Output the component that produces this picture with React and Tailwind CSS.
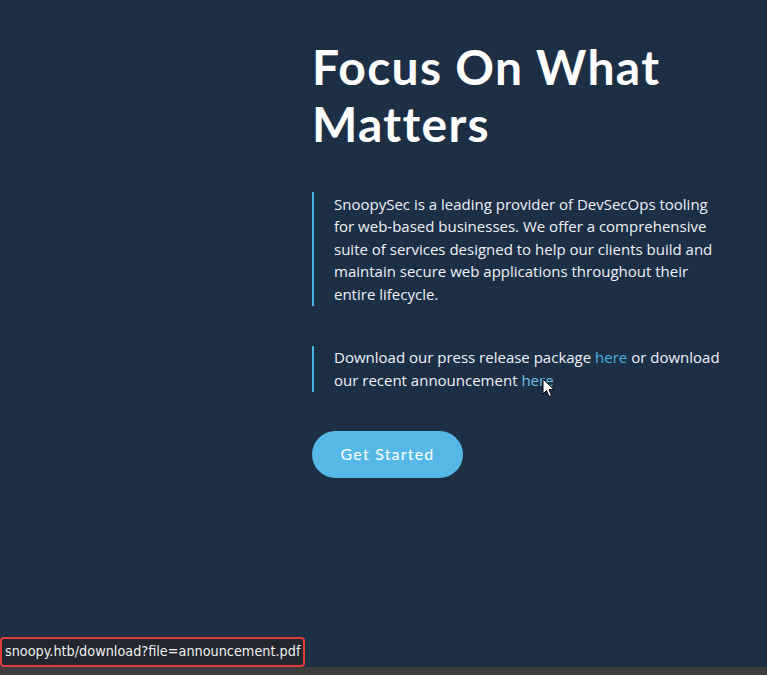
export default function App() {
  return (
    <div className="relative flex h-[675px] w-[767px] flex-col overflow-hidden bg-[#1d2f45]">
      <main className="flex flex-1 flex-col pl-[312px] pr-[40px] pt-[38px]">
        <h1
          className="text-[48px] font-bold leading-[57px] tracking-[1.3px] text-white"
          style={{ fontFamily: '"Lato", "Open Sans", sans-serif' }}
        >
          Focus On What
          <br />
          Matters
        </h1>
        <div
          className="mt-[40px] border-l-2 border-[#47b2e4] pl-[20px] text-[15px] leading-[22.5px] text-[#eef1f5]"
          style={{ fontFamily: '"Open Sans", sans-serif' }}
        >
          <p className="py-[0.5px]">
            SnoopySec is a leading provider of DevSecOps tooling for web-based businesses. We offer a comprehensive suite of services designed to help our clients build and maintain secure web applications throughout their entire lifecycle.
          </p>
        </div>
        <div
          className="mt-[40px] border-l-2 border-[#47b2e4] pl-[20px] text-[15px] leading-[23px] text-[#eef1f5]"
          style={{ fontFamily: '"Open Sans", sans-serif' }}
        >
          <p className="relative">
            Download our press release package <span className="text-[#47b2e4]">here</span> or download our recent announcement{" "}
            <span className="relative text-[#6fbfe6]">
              here
              <svg
                className="pointer-events-none absolute left-[21px] top-[8px]"
                width="13"
                height="20"
                viewBox="0 0 13 20"
              >
                <path
                  d="M1 1 L1 16 L4.5 12.5 L7 18.5 L9.5 17.5 L7 11.5 L12 11.5 Z"
                  fill="#ffffff"
                  stroke="#000000"
                  strokeWidth="1"
                />
              </svg>
            </span>
          </p>
        </div>
        <div className="mt-[39px]">
          <button
            className="h-[47px] w-[151px] rounded-full bg-[#56b8e6] text-[16px] font-normal tracking-[1.2px] text-white"
            style={{ fontFamily: '"Lato", "Open Sans", sans-serif' }}
          >
            Get Started
          </button>
        </div>
      </main>
      <div className="h-[8px] bg-[#3c3c3c]" />
      <div
        className="absolute bottom-[8px] left-0 flex h-[30px] items-center rounded-[4px] border-2 border-[#e03c3c] bg-[#22262e] px-[3px] text-[14.3px] text-[#f0f0f0]"
        style={{ fontFamily: '"DejaVu Sans", sans-serif', fontStretch: 'condensed' }}
      >
        snoopy.htb/download?file=announcement.pdf
      </div>
    </div>
  );
}
